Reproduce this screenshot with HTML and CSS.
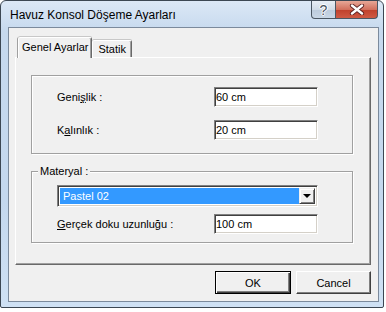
FILE: index.html
```html
<!DOCTYPE html>
<html lang="tr">
<head>
    <meta charset="UTF-8">
    <title>Havuz Konsol Döşeme Ayarları</title>
    <link rel="stylesheet" href="styles.css">
</head>
<body>
    <div class="window">
        <div class="titlebar">
            <span class="title">Havuz Konsol Döşeme Ayarları</span>
            <div class="caption-buttons">
                <button class="cap-help" type="button">?</button>
                <button class="cap-close" type="button">
                    <svg width="16" height="11" viewBox="0 0 16 11">
                        <path d="M3 1.5 L13 9.5 M13 1.5 L3 9.5" stroke="#5a2020" stroke-width="4.2" stroke-linecap="round"/>
                        <path d="M3 1.5 L13 9.5 M13 1.5 L3 9.5" stroke="#fff" stroke-width="2.4" stroke-linecap="round"/>
                    </svg>
                </button>
            </div>
        </div>

        <div class="client">
            <div class="tabs">
                <div class="tab active">Genel Ayarlar</div>
                <div class="tab">Statik</div>
            </div>

            <div class="panel">
                <div class="group">
                    <label class="field-label" for="genislik">Geni<u>ş</u>lik :</label>
                    <input class="field" type="text" id="genislik" value="60 cm">
                    <label class="field-label" for="kalinlik">K<u>a</u>lınlık :</label>
                    <input class="field" type="text" id="kalinlik" value="20 cm">
                </div>

                <div class="group materyal">
                    <span class="legend">Materyal :</span>
                    <div class="combo">
                        <span class="combo-value">Pastel 02</span>
                        <span class="combo-drop"><span class="arrow"></span></span>
                    </div>
                    <label class="field-label" for="uzunluk"><u>G</u>erçek doku uzunluğu :</label>
                    <input class="field" type="text" id="uzunluk" value="100 cm">
                </div>
            </div>

            <div class="actions">
                <button class="btn default" type="button">OK</button>
                <button class="btn" type="button">Cancel</button>
            </div>
        </div>
    </div>
</body>
</html>
```

FILE: styles.css
```css
body {
    margin: 0;
    background: #fff;
    font-family: "Liberation Sans", Arial, sans-serif;
    font-size: 11px;
    color: #000;
}

.window {
    width: 384px;
    height: 308px;
    box-sizing: border-box;
    padding: 0 4px 5px 7px;
    border: 1px solid #3c4753;
    border-radius: 6px 6px 2px 2px;
    background: linear-gradient(to bottom, #dce8f6, #c6d9ee 30px, #c4d8ee 200px, #cfe1f4);
    display: flex;
    flex-direction: column;
}

.titlebar {
    height: 26px;
    display: flex;
    align-items: flex-start;
}

.title {
    font-size: 12px;
    line-height: 14px;
    padding: 7px 0 0 2px;
}

.caption-buttons {
    margin-left: auto;
    margin-right: 1px;
    display: flex;
}

.caption-buttons button {
    height: 18px;
    margin: 0;
    padding: 0;
    border: 1px solid #4b5763;
    border-top: none;
    display: flex;
    align-items: center;
    justify-content: center;
}

.cap-help {
    width: 25px;
    border-radius: 0 0 0 4px;
    background: linear-gradient(to bottom, #e8eef5, #d0dbe7 50%, #bccbdc 51%, #c9d7e6);
    font-family: "Liberation Sans", Arial, sans-serif;
    font-size: 14px;
    color: #46505c;
    text-shadow: 1px 0 #fff, -1px 0 #fff, 0 1px #fff, 0 -1px #fff;
}

.cap-close {
    width: 42px;
    border-left: none !important;
    border-radius: 0 0 4px 0;
    background: linear-gradient(to bottom, #e7a797, #d2705d 50%, #c0402b 51%, #cf5a44);
}

.client {
    flex: 1;
    background: #f0f0f0;
    border: 1px solid #7b8a9c;
    padding: 9px 7px 7px 6px;
    display: flex;
    flex-direction: column;
}

.tabs {
    height: 20px;
    margin-left: 3px;
    display: flex;
    align-items: flex-end;
}

.tab {
    height: 17px;
    box-sizing: border-box;
    padding: 2px 5px 0 5px;
    background: #f0f0f0;
    border-top: 1px solid #fff;
    border-left: 1px solid #fff;
    border-right: 1px solid #696969;
    border-radius: 2px 2px 0 0;
    box-shadow: inset -1px 0 #a0a0a0, -1px 0 #a0a0a0, 0 -1px #c8c8c8;
}

.tab.active {
    height: 21px;
    margin-bottom: -1px;
    padding: 3px 3px 0 3px;
    position: relative;
    z-index: 1;
}

.panel {
    flex: 1;
    padding: 17px 17px 0 15px;
    border: 1px solid;
    border-color: #fff #696969 #696969 #fff;
    box-shadow: inset -1px -1px #a0a0a0;
}

.group {
    border: 1px solid #a0a0a0;
    box-shadow: inset 1px 1px #fff, 1px 1px #fff;
    padding: 11px 0 13px 25px;
    display: grid;
    grid-template-columns: 157px 104px;
    row-gap: 13px;
    align-items: center;
}

.group.materyal {
    margin-top: 17px;
    padding: 13px 0 8px 25px;
    row-gap: 7px;
    position: relative;
}

.legend {
    position: absolute;
    top: -7px;
    left: 6px;
    padding: 0 2px;
    background: #f0f0f0;
    line-height: 13px;
}

.field-label {
    line-height: 13px;
}

.field {
    width: 104px;
    height: 20px;
    box-sizing: border-box;
    margin: 0;
    padding: 0 1px;
    font-family: "Liberation Sans", Arial, sans-serif;
    font-size: 11px;
    color: #000;
    background: #fff;
    border: 1px solid;
    border-color: #808080 #fff #fff #808080;
    box-shadow: inset 1px 1px #404040, inset -1px -1px #d4d0c8;
    outline: none;
}

.combo {
    grid-column: 1 / -1;
    width: 261px;
    height: 22px;
    box-sizing: border-box;
    padding: 2px;
    border: 1px solid;
    border-color: #808080 #fff #fff #808080;
    box-shadow: inset 1px 1px #404040, inset -1px -1px #d4d0c8;
    background: #fff;
    display: flex;
}

.combo-value {
    flex: 1;
    background: #3399ff;
    color: #fff;
    padding-left: 3px;
    line-height: 16px;
}

.combo-drop {
    width: 16px;
    box-sizing: border-box;
    background: #f0f0f0;
    border: 1px solid;
    border-color: #f0f0f0 #404040 #404040 #f0f0f0;
    box-shadow: inset 1px 1px #fff, inset -1px -1px #808080;
    display: flex;
    align-items: center;
    justify-content: center;
}

.arrow {
    width: 0;
    height: 0;
    border-left: 4px solid transparent;
    border-right: 4px solid transparent;
    border-top: 4px solid #000;
}

.actions {
    margin-top: 6px;
    display: flex;
    justify-content: flex-end;
    gap: 5px;
}

.btn {
    width: 75px;
    height: 23px;
    margin: 0;
    padding: 0;
    font-family: "Liberation Sans", Arial, sans-serif;
    font-size: 11px;
    color: #000;
    background: #f0f0f0;
    border: 1px solid;
    border-color: #fff #404040 #404040 #fff;
    box-shadow: inset -1px -1px #808080;
}

.btn.default {
    width: 76px;
    border-color: #000;
    box-shadow: inset 1px 1px #fff, inset -1px -1px #404040, inset -2px -2px #808080;
}
```
